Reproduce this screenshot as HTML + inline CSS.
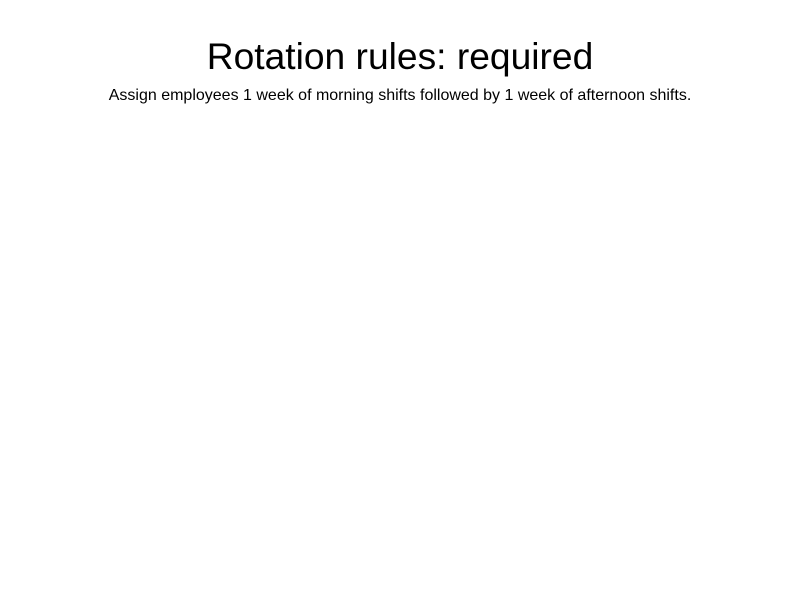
<!DOCTYPE html>
<html><head><style>
html,body{margin:0;padding:0;background:#fff;width:800px;height:600px;overflow:hidden;font-family:"Liberation Sans",Arial,sans-serif;color:#000}
h1{position:absolute;top:35px;left:0;width:800px;text-align:center;margin:0;font-weight:normal;font-size:37.2px;line-height:42px}
p{position:absolute;top:86px;left:0;width:800px;text-align:center;margin:0;font-size:16px;line-height:19px}
</style></head><body>
<h1>Rotation rules: required</h1>
<p>Assign employees 1 week of morning shifts followed by 1 week of afternoon shifts.</p>
</body></html>
